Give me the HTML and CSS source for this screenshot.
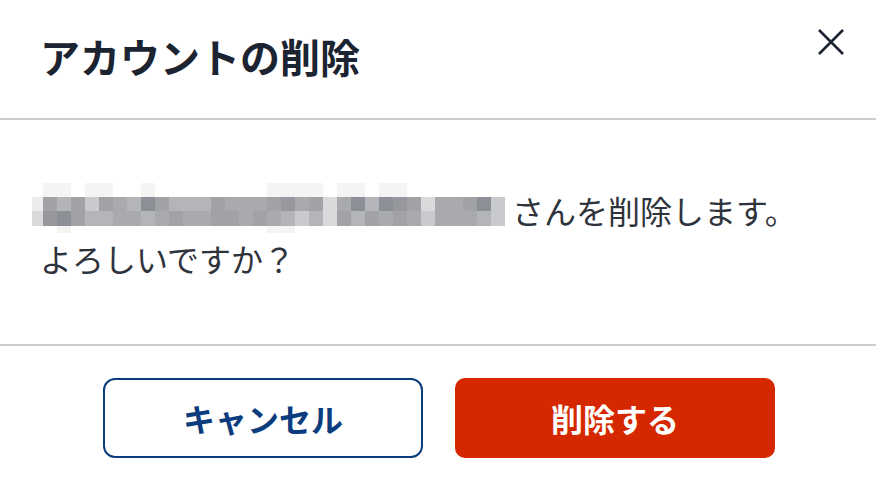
FILE: index.html
```html
<!DOCTYPE html>
<html lang="ja">
  <head>
    <meta charset="UTF-8" />
    <meta name="viewport" content="width=device-width, initial-scale=1.0" />
    <title>アカウントの削除</title>
    <link rel="stylesheet" href="styles.css">
  </head>
  <body>
    <div class="modal">
      <div class="modal-header">
        <h2 class="modal-title">アカウントの削除</h2>
        <button class="close-btn" aria-label="閉じる">
          <svg width="48" height="48" viewBox="0 0 48 48">
            <path d="M12 12 L36 36 M36 12 L12 36" />
          </svg>
        </button>
      </div>

      <div class="modal-body">
        <p>
          <!-- user name is masked -->
          <span class="mosaic" aria-label="ユーザー名"
            ><i></i><i class="s0"></i><i class="s0"></i><i></i><i class="s0"></i><i class="s0"></i><i></i><i></i><i class="s0"></i><i></i><i></i><i></i><i></i><i></i><i></i><i></i><i></i><i class="s0"></i><i class="s0"></i><i class="s0"></i><i class="s0"></i><i></i><i class="s0"></i><i class="s0"></i><i></i><i class="s0"></i><i class="s0"></i><i></i><i></i><i></i><i></i><i></i><i></i><i></i
            ><i class="sb"></i><i class="s5"></i><i class="s3"></i><i class="s5"></i><i class="s2"></i><i class="s5"></i><i class="s4"></i><i class="s3"></i><i class="s7"></i><i class="s5"></i><i class="s3"></i><i class="s3"></i><i class="s3"></i><i class="s5"></i><i class="s4"></i><i class="s4"></i><i class="s4"></i><i class="s5"></i><i class="s6"></i><i class="s4"></i><i class="s5"></i><i class="s1"></i><i class="s4"></i><i class="s7"></i><i class="s3"></i><i class="s7"></i><i class="s6"></i><i class="s5"></i><i class="s1"></i><i class="s4"></i><i class="s4"></i><i class="s5"></i><i class="s7"></i><i class="s2"></i
            ><i class="s1"></i><i class="s6"></i><i class="s7"></i><i class="s5"></i><i class="s3"></i><i class="s3"></i><i class="s4"></i><i class="s4"></i><i class="s3"></i><i class="s4"></i><i class="s5"></i><i class="s4"></i><i class="s4"></i><i class="s5"></i><i class="s5"></i><i class="s4"></i><i class="s5"></i><i class="s4"></i><i class="s3"></i><i class="s2"></i><i class="s3"></i><i class="s1"></i><i class="s5"></i><i class="s3"></i><i class="s5"></i><i class="s4"></i><i class="s5"></i><i class="s4"></i><i class="s2"></i><i class="s4"></i><i class="s4"></i><i class="s4"></i><i class="s3"></i><i class="s2"></i
            ><i></i><i></i><i class="s0"></i><i></i><i></i><i></i><i></i><i></i><i></i><i></i><i></i><i></i><i></i><i></i><i></i><i></i><i></i><i class="s0"></i><i class="s0"></i><i></i><i></i><i></i><i></i><i></i><i></i><i></i><i></i><i></i><i></i><i></i><i></i><i></i><i></i><i></i
          ></span>さんを削除します。<br />よろしいですか？
        </p>
      </div>

      <div class="modal-footer">
        <button class="btn btn-cancel">キャンセル</button>
        <button class="btn btn-delete">削除する</button>
      </div>
    </div>
  </body>
</html>
```

FILE: styles.css
```css
/* General styling */
body {
  margin: 0;
  font-family: "Noto Sans CJK JP", "Noto Sans", sans-serif;
  background-color: #fff;
  color: #333;
}

.modal {
  width: 876px;
  height: 480px;
  background-color: #fff;
  overflow: hidden;
}

/* Header */
.modal-header {
  display: flex;
  justify-content: space-between;
  align-items: flex-start;
  height: 100px;
  padding: 18px 21px 0 40px;
  border-bottom: 2px solid #cdcdcd;
}

.modal-title {
  margin: 8px 0 0;
  font-size: 40px;
  line-height: 60px;
  font-weight: bold;
  color: #1c2431;
}

.close-btn {
  width: 48px;
  height: 48px;
  padding: 0;
  border: none;
  background: none;
  cursor: pointer;
}

.close-btn svg {
  display: block;
}

.close-btn path {
  fill: none;
  stroke: #1c2431;
  stroke-width: 2.6;
}

/* Body */
.modal-body {
  height: 224px;
  padding: 0 40px;
  border-bottom: 2px solid #cdcdcd;
}

.modal-body p {
  margin: 0;
  padding-top: 66px;
  font-size: 32px;
  line-height: 48px;
  color: #2f333b;
}

.mosaic {
  display: inline-grid;
  grid-template-columns: 11px repeat(33, 14px);
  grid-template-rows: 14px 14px 15px 7px;
  vertical-align: top;
  margin: -3px 7px 0 -8px;
}

.mosaic i {
  display: block;
}

.mosaic .s0 { background-color: #f4f4f5; }
.mosaic .sb { background-color: #ececed; }
.mosaic .s1 { background-color: #d9dadc; }
.mosaic .s2 { background-color: #c9cacd; }
.mosaic .s3 { background-color: #b4b5b9; }
.mosaic .s4 { background-color: #a8aaae; }
.mosaic .s5 { background-color: #a0a2a6; }
.mosaic .s6 { background-color: #96989e; }
.mosaic .s7 { background-color: #8c8f95; }

/* Footer buttons */
.modal-footer {
  display: flex;
  justify-content: center;
  gap: 32px;
  padding: 32px 0 0 2px;
}

.btn {
  width: 320px;
  height: 80px;
  font-family: inherit;
  font-size: 32px;
  font-weight: bold;
  cursor: pointer;
}

.btn-cancel {
  background-color: #fff;
  color: #0b3c7d;
  border: 2px solid #0b3c7d;
  border-radius: 12px;
}

.btn-delete {
  background-color: #d62800;
  color: #fff;
  border: none;
  border-radius: 10px;
}
```
